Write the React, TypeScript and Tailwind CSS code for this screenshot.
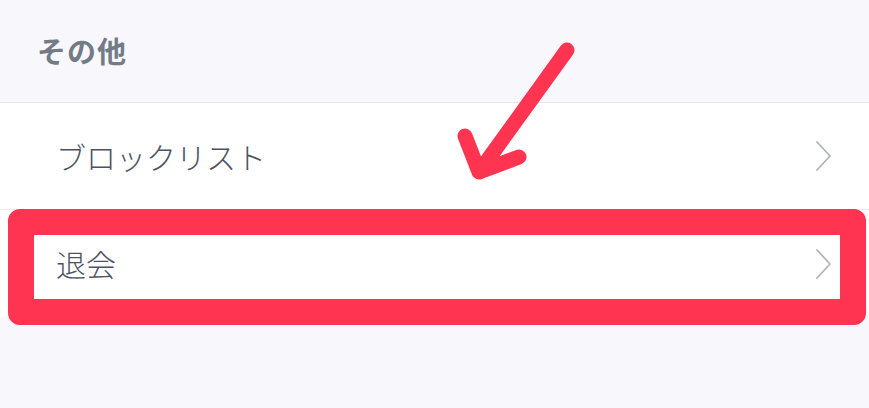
const FONT = { fontFamily: '"Noto Sans CJK JP", "Noto Sans", sans-serif' };

function Chevron() {
  return (
    <svg width="18" height="32" viewBox="0 0 18 32" fill="none" className="shrink-0">
      <path d="M2 2 L15 16 L2 30" stroke="#aeb4be" strokeWidth="1.8" strokeLinecap="round" strokeLinejoin="round" />
    </svg>
  );
}

const ROWS = ['ブロックリスト', '退会'];

export default function App() {
  return (
    <div className="relative w-[869px] h-[408px] bg-[#f8f7fc] overflow-hidden" style={FONT}>
      {/* Section header */}
      <div className="h-[103px] flex items-center pl-[37px] border-b border-[#e6e6ec]">
        <h2 className="text-[29px] font-bold text-[#737b87] tracking-[1px]">その他</h2>
      </div>

      {/* List */}
      <div className="bg-white">
        {ROWS.map((r, i) => (
          <div
            key={r}
            className={`h-[107px] flex items-center justify-between pl-[56px] pr-[36px] ${i === 0 ? 'border-b border-[#ececf1]' : ''}`}
          >
            <span className="text-[30px] font-light text-[#4b5264]">{r}</span>
            <Chevron />
          </div>
        ))}
      </div>

      {/* Annotation: highlight box */}
      <div className="absolute left-[8px] top-[209px] w-[858px] h-[116px] rounded-[12px] border-[26px] border-[#fe3450]" />

      {/* Annotation: arrow */}
      <svg className="absolute left-0 top-0" width="869" height="408" viewBox="0 0 869 408" fill="none">
        <path
          d="M567 50 L479 172 M465 136 L479 172 L519 157"
          stroke="#fe3450"
          strokeWidth="15"
          strokeLinecap="round"
          strokeLinejoin="round"
        />
      </svg>
    </div>
  );
}
